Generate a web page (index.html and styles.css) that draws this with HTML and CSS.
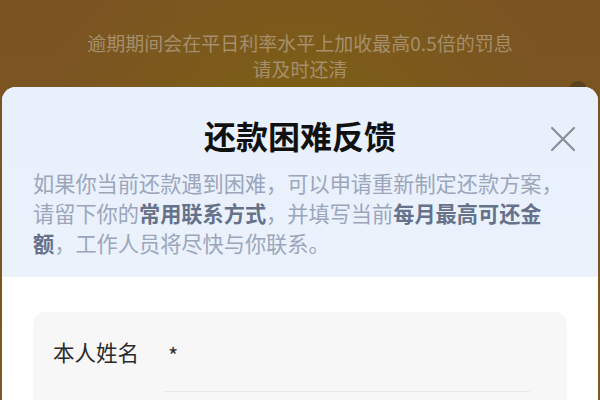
FILE: index.html
```html
<html>
  <head>
    <meta charset="utf-8">
    <title>还款困难反馈</title>
    <meta name="viewport" content="width=device-width, initial-scale=1">
    <link rel="stylesheet" href="styles.css">
  </head>
  <body>
    <div class="page">
      <div class="notice">
        逾期期间会在平日利率水平上加收最高0.5倍的罚息<br>
        请及时还清
      </div>
      <div class="peek"></div>

      <div class="sheet">
        <div class="sheet-head">
          <h1>还款困难反馈</h1>
          <a href="#" class="close" aria-label="关闭">
            <svg width="26" height="26" viewBox="0 0 26 26" fill="none">
              <path d="M2 2L24 24M24 2L2 24" stroke="#8a8f98" stroke-width="2.2" stroke-linecap="round" />
            </svg>
          </a>
          <p class="intro">
            如果你当前还款遇到困难，可以申请重新制定还款方案，请留下你的<b>常用联系方式</b>，并填写当前<b>每月最高可还金额</b>，工作人员将尽快与你联系。
          </p>
        </div>

        <form class="card">
          <div class="row">
            <label>本人姓名</label>
            <div class="field">*</div>
          </div>
        </form>
      </div>
    </div>
  </body>
</html>
```

FILE: styles.css
```css
body {
  margin: 0;
  font-family: "Noto Sans CJK SC", "Noto Sans", sans-serif;
}

.page {
  position: relative;
  height: 400px;
  overflow: hidden;
  background:
    radial-gradient(ellipse 60% 80% at 50% 30%, rgba(124, 96, 20, 0.9), rgba(124, 96, 20, 0) 70%),
    linear-gradient(180deg, #7b5322 0%, #7a5620 60%, #7a5a24 100%);
}

.notice {
  padding-top: 30px;
  text-align: center;
  font-size: 19px;
  line-height: 26px;
  color: #a68f6c;
}

/* something dark behind the sheet, only its top shows */
.peek {
  position: absolute;
  top: 81px;
  left: 569px;
  width: 18px;
  height: 18px;
  border-radius: 50%;
  background: #5a4320;
}

.sheet {
  position: relative;
  margin: 5px 2px 0;
  height: 320px;
  border-radius: 14px 14px 0 0;
  background: #fff;
  overflow: hidden;
}

.sheet-head {
  position: relative;
  padding: 28px 31px 19px;
  background: linear-gradient(180deg, #e8f0fc 0%, #ebf2fc 100%);
}

.sheet-head h1 {
  margin: 0;
  text-align: center;
  font-size: 32px;
  line-height: 40px;
  font-weight: 700;
  color: #111;
}

.close {
  position: absolute;
  top: 39px;
  right: 22px;
  display: flex;
}

.intro {
  margin: 13px 0 0;
  font-size: 21.2px;
  line-height: 30px;
  color: #9ba6bb;
}

.intro b {
  font-weight: 600;
  color: #66728a;
}

.card {
  margin: 35px 31px 0;
  padding: 26px 37px 0 20px;
  height: 120px;
  border-radius: 12px;
  background: #f7f7f7;
}

.row {
  display: flex;
}

.row label {
  width: 110px;
  font-size: 21.5px;
  line-height: 28px;
  color: #2a2a2a;
}

.field {
  flex-grow: 1;
  height: 53px;
  padding-left: 5px;
  font-size: 22px;
  line-height: 32px;
  color: #333;
  border-bottom: 1px solid #e9e9e9;
}
```
